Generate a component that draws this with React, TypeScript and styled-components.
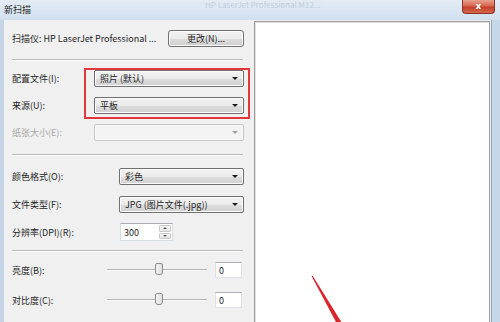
import React from "react";
import styled, { createGlobalStyle } from "styled-components";

const GlobalStyle = createGlobalStyle`
  html, body {
    margin: 0;
    padding: 0;
    background: #c9d9ec;
  }
  body {
    font-family: "Noto Sans CJK SC", "Noto Sans", sans-serif;
    font-size: 9px;
    color: #1e1e1e;
  }
`;

const Window = styled.div`
  width: 500px;
  height: 322px;
  overflow: hidden;
  display: flex;
  flex-direction: column;
  background: linear-gradient(90deg, #c3d4e8 0%, #d3e1f0 40%, #c6d7ea 100%);
`;

const TitleBar = styled.div`
  height: 20px;
  flex: none;
  display: flex;
  align-items: flex-start;
  background: linear-gradient(180deg, #e4ecf5 0%, #d9e5f2 60%, #d0dff0 100%);
`;

const Title = styled.div`
  padding: 3px 0 0 4px;
  line-height: 13px;
  color: #202020;
`;

const Ghost = styled.div`
  margin-left: 174px;
  line-height: 9px;
  font-size: 8px;
  color: #bfcbda;
  white-space: nowrap;
`;

const CloseButton = styled.div`
  margin-left: auto;
  margin-right: 5px;
  width: 33px;
  height: 14px;
  box-sizing: border-box;
  border: 1px solid #8a3325;
  border-top: none;
  border-radius: 0 0 4px 4px;
  background: linear-gradient(180deg, #e9a08f 0%, #d8664f 45%, #c3402a 55%, #d4664c 100%);
  display: flex;
  align-items: center;
  justify-content: center;
  color: #fff;
  font-family: "DejaVu Sans", sans-serif;
  font-weight: bold;
  font-size: 9px;
  line-height: 1;
`;

const Frame = styled.div`
  flex: 1;
  display: flex;
  padding: 0 8px 0 4px;
  min-height: 0;
`;

const Client = styled.div`
  flex: 1;
  display: flex;
  background: #f0f0f0;
  border-right: 1px solid #9aa7b6;
`;

const Settings = styled.div`
  position: relative;
  width: 250px;
  flex: none;
  box-sizing: border-box;
  padding: 8px 10px 0 8px;
  display: flex;
  flex-direction: column;
`;

const ScannerRow = styled.div`
  height: 20px;
  display: flex;
  align-items: center;
  justify-content: space-between;
`;

const Label = styled.span<{ $disabled?: boolean }>`
  white-space: nowrap;
  color: ${(p) => (p.$disabled ? "#a8a8a8" : "#1e1e1e")};
`;

const PushButton = styled.div`
  width: 76px;
  height: 17px;
  box-sizing: border-box;
  border: 1px solid #707070;
  border-radius: 3px;
  background: linear-gradient(180deg, #f2f2f2 0%, #ebebeb 50%, #dddddd 51%, #cfcfcf 100%);
  box-shadow: inset 0 0 0 1px #fbfbfb;
  display: flex;
  align-items: center;
  justify-content: center;
`;

const Separator = styled.div<{ $top: number; $bottom: number }>`
  margin: ${(p) => p.$top}px 1px ${(p) => p.$bottom}px 0;
  border-top: 1px solid #b8b8b8;
  border-bottom: 1px solid #ffffff;
`;

const FieldRow = styled.div<{ $label: number; $h: number }>`
  height: ${(p) => p.$h}px;
  display: grid;
  grid-template-columns: ${(p) => p.$label}px 1fr;
  align-items: center;
`;

const Select = styled.div<{ $disabled?: boolean }>`
  height: 17px;
  box-sizing: border-box;
  border: 1px solid ${(p) => (p.$disabled ? "#c8c8c8" : "#707070")};
  border-radius: 2px;
  background: ${(p) =>
    p.$disabled
      ? "#f4f4f4"
      : "linear-gradient(180deg, #f3f3f3 0%, #ebebeb 50%, #dddddd 51%, #d2d2d2 100%)"};
  box-shadow: inset 0 0 0 1px ${(p) => (p.$disabled ? "#f8f8f8" : "#fbfbfb")};
  display: flex;
  align-items: center;
  padding: 0 5px 0 5px;
`;

const SelectText = styled.span`
  flex: 1;
  white-space: nowrap;
`;

const Caret = styled.span<{ $disabled?: boolean }>`
  width: 0;
  height: 0;
  border-left: 3px solid transparent;
  border-right: 3px solid transparent;
  border-top: 3px solid ${(p) => (p.$disabled ? "#a0a0a0" : "#1a1a1a")};
`;

const SpinBox = styled.div`
  width: 53px;
  height: 18px;
  box-sizing: border-box;
  display: flex;
  background: #fff;
  border: 1px solid #d6dce4;
  border-top-color: #abadb3;
`;

const SpinText = styled.div`
  flex: 1;
  padding-left: 3px;
  display: flex;
  align-items: center;
`;

const SpinButtons = styled.div`
  width: 12px;
  display: flex;
  flex-direction: column;
  gap: 1px;
  padding: 1px;
`;

const SpinButton = styled.div<{ $up?: boolean }>`
  flex: 1;
  border: 1px solid #c9c9c9;
  border-radius: 1px;
  background: linear-gradient(180deg, #f6f6f6, #e4e4e4);
  display: flex;
  align-items: center;
  justify-content: center;
  &::after {
    content: "";
    border-left: 2px solid transparent;
    border-right: 2px solid transparent;
    ${(p) => (p.$up ? "border-bottom" : "border-top")}: 2px solid #5a5a5a;
  }
`;

const SliderRow = styled.div`
  height: 30px;
  display: grid;
  grid-template-columns: 87px 100px 27px;
  column-gap: 8px;
  align-items: center;
`;

const Slider = styled.div`
  position: relative;
  height: 14px;
  &::before {
    content: "";
    position: absolute;
    left: 0;
    right: 0;
    top: 6px;
    height: 1px;
    background: #b4b4b4;
    border-bottom: 1px solid #fafafa;
  }
`;

const Thumb = styled.div`
  position: absolute;
  top: 0;
  width: 8px;
  height: 12px;
  box-sizing: border-box;
  border: 1px solid #8c8c8c;
  border-radius: 2px 2px 3px 3px;
  background: linear-gradient(90deg, #f4f4f4, #dedede);
`;

const ValueBox = styled.div`
  height: 16px;
  box-sizing: border-box;
  background: #fff;
  border: 1px solid #dfe3e8;
  border-top-color: #abadb3;
  padding-left: 3px;
  display: flex;
  align-items: center;
`;

const Highlight = styled.div`
  position: absolute;
  left: 80px;
  top: 48px;
  width: 166px;
  height: 51px;
  box-sizing: border-box;
  border: 2px solid #e2383c;
  pointer-events: none;
`;

const Preview = styled.div`
  position: relative;
  flex: 1;
  margin: 1px 1px 0 0;
  background: #ffffff;
  border: 1px solid #9d9d9d;
  border-bottom: none;
  box-shadow: inset 1px 1px 0 #e2e2e2;
`;

const Arrow = styled.svg`
  position: absolute;
  left: 0;
  top: 0;
`;

type Option = { label: string; value: string; disabled?: boolean };

const profileOptions: Option[] = [
  { label: "配置文件(I):", value: "照片 (默认)" },
  { label: "来源(U):", value: "平板" },
  { label: "纸张大小(E):", value: "", disabled: true },
];

const formatOptions: Option[] = [
  { label: "颜色格式(O):", value: "彩色" },
  { label: "文件类型(F):", value: "JPG (图片文件(.jpg))" },
];

const adjustments = [
  { label: "亮度(B):", value: 0 },
  { label: "对比度(C):", value: 0 },
];

function Dropdown({ value, disabled }: { value: string; disabled?: boolean }) {
  return (
    <Select $disabled={disabled}>
      <SelectText>{value}</SelectText>
      <Caret $disabled={disabled} />
    </Select>
  );
}

export default function App() {
  return (
    <>
      <GlobalStyle />
      <Window>
        <TitleBar>
          <Title>新扫描</Title>
          <Ghost>HP LaserJet Professional M12...</Ghost>
          <CloseButton>x</CloseButton>
        </TitleBar>
        <Frame>
          <Client>
            <Settings>
              <ScannerRow>
                <Label>扫描仪: HP LaserJet Professional ...</Label>
                <PushButton>更改(N)...</PushButton>
              </ScannerRow>
              <Separator $top={11} $bottom={4} />
              {profileOptions.map((o) => (
                <FieldRow key={o.label} $label={82} $h={27}>
                  <Label $disabled={o.disabled}>{o.label}</Label>
                  <Dropdown value={o.value} disabled={o.disabled} />
                </FieldRow>
              ))}
              <Separator $top={8} $bottom={6} />
              {formatOptions.map((o) => (
                <FieldRow key={o.label} $label={107} $h={28}>
                  <Label>{o.label}</Label>
                  <Dropdown value={o.value} />
                </FieldRow>
              ))}
              <FieldRow $label={108} $h={28}>
                <Label>分辨率(DPI)(R):</Label>
                <SpinBox>
                  <SpinText>300</SpinText>
                  <SpinButtons>
                    <SpinButton $up />
                    <SpinButton />
                  </SpinButtons>
                </SpinBox>
              </FieldRow>
              <Separator $top={4} $bottom={3} />
              {adjustments.map((a) => (
                <SliderRow key={a.label}>
                  <Label>{a.label}</Label>
                  <Slider>
                    <Thumb style={{ left: 48 }} />
                  </Slider>
                  <ValueBox>{a.value}</ValueBox>
                </SliderRow>
              ))}
              <Highlight />
            </Settings>
            <Preview>
              <Arrow width="237" height="301" viewBox="0 0 237 301">
                <polygon points="56.5,254 57.8,254 87,301 81.5,301" fill="#d9262b" />
              </Arrow>
            </Preview>
          </Client>
        </Frame>
      </Window>
    </>
  );
}
